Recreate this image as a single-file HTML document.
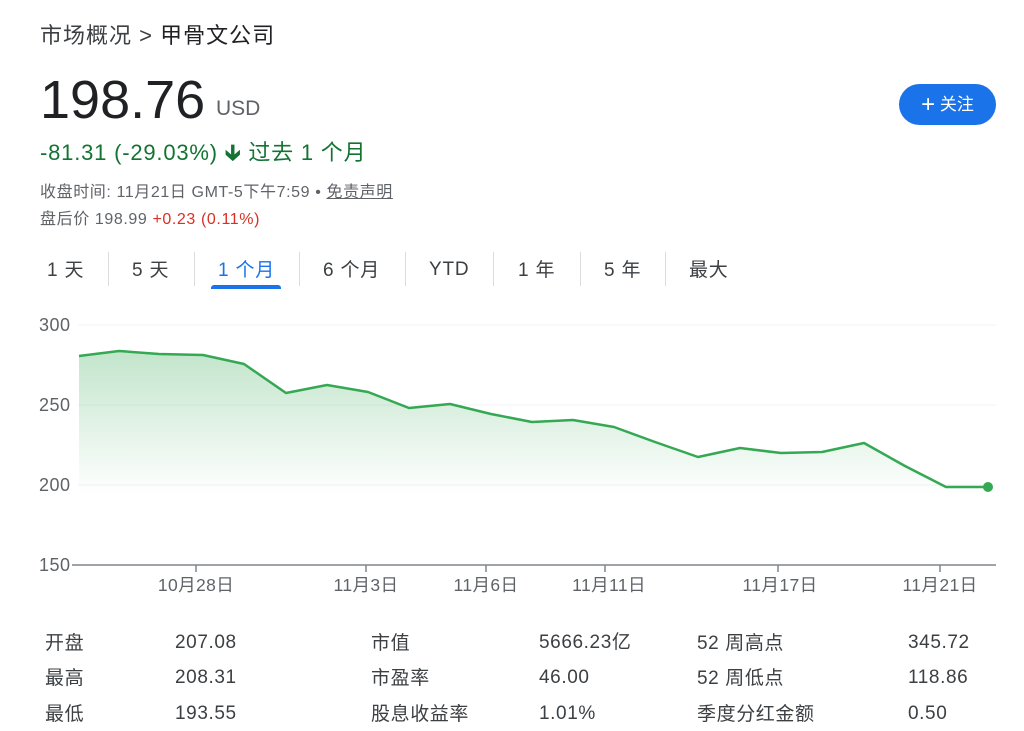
<!DOCTYPE html>
<html><head><meta charset="utf-8"><style>
body{margin:0;width:1024px;height:731px;background:#fff;font-family:"Liberation Sans","Noto Sans CJK SC",sans-serif;position:relative;overflow:hidden;color:#202124}
.a{position:absolute;white-space:nowrap;line-height:1.2}
.g{color:#137333}.gr{color:#5f6368}.r{color:#d93025}
.tab{position:absolute;top:259px;font-size:19px;color:#3c4043;letter-spacing:0.8px;line-height:24px}
.sep{position:absolute;top:252px;width:1px;height:34px;background:#dadce0}
.t{font-size:19px;color:#3c4043;letter-spacing:0.6px;line-height:22px;margin-top:2px}
.v{font-size:19px;color:#3c4043;letter-spacing:0.6px;line-height:22px;margin-top:1px}
</style></head><body>
<div class="a" style="left:40px;top:23px;font-size:22px;color:#3c4043;letter-spacing:1px">市场概况 &gt; <span style="color:#202124">甲骨文公司</span></div>
<div class="a" style="left:40px;top:68px;font-size:54px;color:#202124;letter-spacing:0px">198.76</div>
<div class="a" style="left:216px;top:96px;font-size:21px;color:#5f6368">USD</div>
<div class="a g" style="left:40px;top:140px;font-size:22px;letter-spacing:0.8px">-81.31 (-29.03%) <span style="font-weight:bold">&#x1F873;</span> 过去 1 个月</div>
<div class="a gr" style="left:40px;top:183px;font-size:16px;letter-spacing:0.6px">收盘时间: 11月21日 GMT-5下午7:59 • <span style="text-decoration:underline">免责声明</span></div>
<div class="a gr" style="left:40px;top:210px;font-size:16px;letter-spacing:0.6px">盘后价 198.99 <span class="r">+0.23 (0.11%)</span></div>
<div class="a" style="left:899px;top:84px;width:97px;height:41px;border-radius:21px;background:#1a73e8;color:#fff;font-size:17px;line-height:41px;text-align:center"><span style="font-size:24px;vertical-align:-2px">+</span> 关注</div>
<div class="tab" style="left:47px">1 天</div><div class="sep" style="left:108px"></div>
<div class="tab" style="left:132px">5 天</div><div class="sep" style="left:194px"></div>
<div class="tab" style="left:218px;color:#1a73e8">1 个月</div>
<div class="a" style="left:211px;top:285px;width:70px;height:4px;background:#1a73e8;border-radius:3px 3px 0 0"></div>
<div class="sep" style="left:299px"></div>
<div class="tab" style="left:323px">6 个月</div><div class="sep" style="left:405px"></div>
<div class="tab" style="left:429px;top:258px">YTD</div><div class="sep" style="left:493px"></div>
<div class="tab" style="left:518px">1 年</div><div class="sep" style="left:580px"></div>
<div class="tab" style="left:604px">5 年</div><div class="sep" style="left:665px"></div>
<div class="tab" style="left:689px">最大</div>
<svg class="a" style="left:0;top:300px" width="1024" height="310" viewBox="0 300 1024 310">
<defs><linearGradient id="gd" x1="0" y1="0" x2="0" y2="1"><stop offset="0" stop-color="#34a853" stop-opacity=".3"/><stop offset="1" stop-color="#34a853" stop-opacity="0"/></linearGradient></defs>
<g stroke="#f1f3f4" stroke-width="1"><line x1="78" y1="325" x2="996" y2="325"/><line x1="78" y1="405" x2="996" y2="405"/><line x1="78" y1="485" x2="996" y2="485"/></g>
<g font-size="18" fill="#5f6368" font-family="Liberation Sans,sans-serif" letter-spacing="0.5"><text x="39" y="331">300</text><text x="39" y="411">250</text><text x="39" y="491">200</text><text x="39" y="571">150</text></g>
<path d="M79,356 L119,351 159,354 203,355 244,364 286,393 327,385 368,392 409,408 450,404 491,414 532,422 573,420 614,427 655,442 698,457 740,448 781,453 822,452 864,443 905,466 946,487 988,487 L988,495 L79,495Z" fill="url(#gd)"/>
<polyline points="79,356 119,351 159,354 203,355 244,364 286,393 327,385 368,392 409,408 450,404 491,414 532,422 573,420 614,427 655,442 698,457 740,448 781,453 822,452 864,443 905,466 946,487 988,487" fill="none" stroke="#34a853" stroke-width="2.5" stroke-linejoin="round"/>
<circle cx="988" cy="487" r="5" fill="#34a853"/>
<line x1="72" y1="565" x2="996" y2="565" stroke="#80868b" stroke-width="1.5"/>
<g stroke="#80868b" stroke-width="1.5"><line x1="196" y1="565" x2="196" y2="572"/><line x1="366" y1="565" x2="366" y2="572"/><line x1="486" y1="565" x2="486" y2="572"/><line x1="605" y1="565" x2="605" y2="572"/><line x1="778" y1="565" x2="778" y2="572"/><line x1="940" y1="565" x2="940" y2="572"/></g>
<g font-size="17.5" fill="#5f6368" text-anchor="middle" font-family="Liberation Sans,Noto Sans CJK SC,sans-serif" letter-spacing="0.4"><text x="196" y="591">10月28日</text><text x="366" y="591">11月3日</text><text x="486" y="591">11月6日</text><text x="609" y="591">11月11日</text><text x="780" y="591">11月17日</text><text x="940" y="591">11月21日</text></g>
</svg>
<div class="a t" style="left:45px;top:631px">开盘</div><div class="a v" style="left:175px;top:631px">207.08</div>
<div class="a t" style="left:45px;top:666px">最高</div><div class="a v" style="left:175px;top:666px">208.31</div>
<div class="a t" style="left:45px;top:702px">最低</div><div class="a v" style="left:175px;top:702px">193.55</div>
<div class="a t" style="left:371px;top:631px">市值</div><div class="a v" style="left:539px;top:631px">5666.23亿</div>
<div class="a t" style="left:371px;top:666px">市盈率</div><div class="a v" style="left:539px;top:666px">46.00</div>
<div class="a t" style="left:371px;top:702px">股息收益率</div><div class="a v" style="left:539px;top:702px">1.01%</div>
<div class="a t" style="left:697px;top:631px">52 周高点</div><div class="a v" style="left:908px;top:631px">345.72</div>
<div class="a t" style="left:697px;top:666px">52 周低点</div><div class="a v" style="left:908px;top:666px">118.86</div>
<div class="a t" style="left:697px;top:702px">季度分红金额</div><div class="a v" style="left:908px;top:702px">0.50</div>
</body></html>
